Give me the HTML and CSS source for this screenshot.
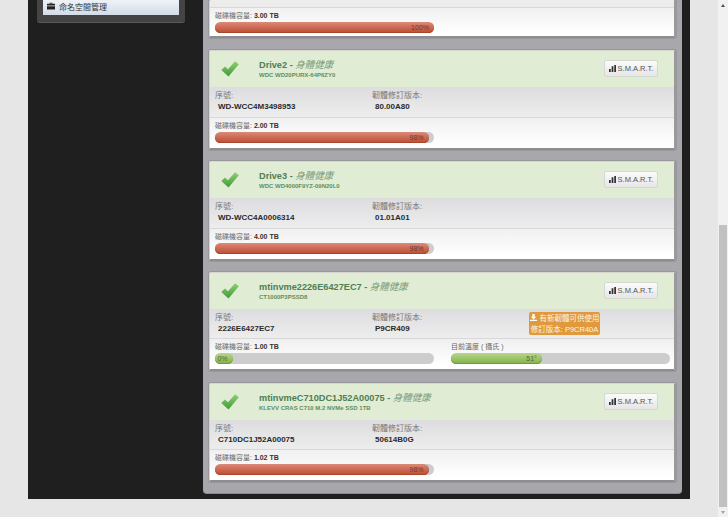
FILE: index.html
```html
<!DOCTYPE html>
<html lang="zh-Hant">
<head>
    <meta charset="UTF-8">
    <title>磁碟機</title>
    <link rel="stylesheet" href="styles.css">
</head>
<body>
    <svg class="defs" width="0" height="0">
        <defs>
            <linearGradient id="check-fill" x1="0" y1="0" x2="0" y2="1">
                <stop offset="0" stop-color="#8fd070"/>
                <stop offset="1" stop-color="#3f9a3c"/>
            </linearGradient>
            <symbol id="check" viewBox="0 0 18 16">
                <path d="M0.300 9 L4 5.400 L7 8.200 L14 0.300 L17.800 3.200 L7.500 15.600 Z" fill="url(#check-fill)"/>
            </symbol>
            <symbol id="bars" viewBox="0 0 8 8">
                <path d="M0 4.500h2V8H0zM3 1.500h2V8H3zM6 0h2v8H6z" fill="#333"/>
            </symbol>
        </defs>
    </svg>

    <div class="main">
        <!-- left menu -->
        <div class="sidebar">
            <div class="menu-panel">
                <div class="menu-item">
                    <svg class="menu-icon" viewBox="0 0 10 9"><path d="M3.4 1.6V.4h3.2v1.2H10V4H0V1.6zM4.2 1.6h1.6V1H4.2zM0 4.8h10V9H0z" fill="#222"/></svg>
                    命名空間管理
                </div>
            </div>
        </div>

        <div class="drive-panel">
            <!-- first card, scrolled off the top -->
            <div class="card card-cut">
                <div class="info-row info-row-cut"></div>
                <div class="meter-row">
                    <div class="meter">
                        <div class="meter-label">磁碟機容量: <b>3.00 TB</b></div>
                        <div class="track"><div class="fill red" style="width: 100%">100%</div></div>
                    </div>
                </div>
            </div>

            <div class="card">
                <div class="card-head">
                    <svg class="check"><use href="#check"/></svg>
                    <div class="head-text">
                        <div class="drive-name">Drive2 - <em>身體健康</em></div>
                        <div class="drive-model">WDC WD20PURX-64P6ZY0</div>
                    </div>
                    <button class="smart"><svg class="bars"><use href="#bars"/></svg>S.M.A.R.T.</button>
                </div>
                <div class="info-row">
                    <div class="info-col"><div class="info-label">序號:</div><div class="info-value">WD-WCC4M3498953</div></div>
                    <div class="info-col"><div class="info-label">韌體修訂版本:</div><div class="info-value">80.00A80</div></div>
                </div>
                <div class="meter-row">
                    <div class="meter">
                        <div class="meter-label">磁碟機容量: <b>2.00 TB</b></div>
                        <div class="track"><div class="fill red" style="width: 97.500%">98%</div></div>
                    </div>
                </div>
            </div>

            <div class="card">
                <div class="card-head">
                    <svg class="check"><use href="#check"/></svg>
                    <div class="head-text">
                        <div class="drive-name">Drive3 - <em>身體健康</em></div>
                        <div class="drive-model">WDC WD4000F9YZ-09N20L0</div>
                    </div>
                    <button class="smart"><svg class="bars"><use href="#bars"/></svg>S.M.A.R.T.</button>
                </div>
                <div class="info-row">
                    <div class="info-col"><div class="info-label">序號:</div><div class="info-value">WD-WCC4A0006314</div></div>
                    <div class="info-col"><div class="info-label">韌體修訂版本:</div><div class="info-value">01.01A01</div></div>
                </div>
                <div class="meter-row">
                    <div class="meter">
                        <div class="meter-label">磁碟機容量: <b>4.00 TB</b></div>
                        <div class="track"><div class="fill red" style="width: 97.500%">98%</div></div>
                    </div>
                </div>
            </div>

            <div class="card card-short">
                <div class="card-head">
                    <svg class="check"><use href="#check"/></svg>
                    <div class="head-text">
                        <div class="drive-name">mtinvme2226E6427EC7 - <em>身體健康</em></div>
                        <div class="drive-model">CT1000P3PSSD8</div>
                    </div>
                    <button class="smart"><svg class="bars"><use href="#bars"/></svg>S.M.A.R.T.</button>
                </div>
                <div class="info-row">
                    <div class="info-col"><div class="info-label">序號:</div><div class="info-value">2226E6427EC7</div></div>
                    <div class="info-col"><div class="info-label">韌體修訂版本:</div><div class="info-value">P9CR409</div></div>
                    <div class="update-badge">
                        <div><svg class="dl-icon" viewBox="0 0 9 9"><path d="M3 0h3v3.6h2L4.500 7 1 3.600h2zM0 7.500h9V9H0z" fill="#fff"/></svg>有新韌體可供使用</div>
                        <div>修訂版本: P9CR40A</div>
                    </div>
                </div>
                <div class="meter-row">
                    <div class="meter">
                        <div class="meter-label">磁碟機容量: <b>1.00 TB</b></div>
                        <div class="track"><div class="fill green" style="width: 8%">0%</div></div>
                    </div>
                    <div class="meter">
                        <div class="meter-label">目前溫度 ( 攝氏 )</div>
                        <div class="track"><div class="fill green" style="width: 41.500%">51°</div></div>
                    </div>
                </div>
            </div>

            <div class="card card-short">
                <div class="card-head">
                    <svg class="check"><use href="#check"/></svg>
                    <div class="head-text">
                        <div class="drive-name">mtinvmeC710DC1J52A00075 - <em>身體健康</em></div>
                        <div class="drive-model">KLEVV CRAS C710 M.2 NVMe SSD 1TB</div>
                    </div>
                    <button class="smart"><svg class="bars"><use href="#bars"/></svg>S.M.A.R.T.</button>
                </div>
                <div class="info-row">
                    <div class="info-col"><div class="info-label">序號:</div><div class="info-value">C710DC1J52A00075</div></div>
                    <div class="info-col"><div class="info-label">韌體修訂版本:</div><div class="info-value">50614B0G</div></div>
                </div>
                <div class="meter-row">
                    <div class="meter">
                        <div class="meter-label">磁碟機容量: <b>1.02 TB</b></div>
                        <div class="track"><div class="fill red" style="width: 97.500%">98%</div></div>
                    </div>
                </div>
            </div>
        </div>
    </div>

    <!-- browser scrollbar -->
    <div class="scrollbar">
        <div class="scroll-up"></div>
        <div class="scroll-space"></div>
        <div class="scroll-thumb"></div>
        <div class="scroll-down"></div>
    </div>
</body>
</html>
```

FILE: styles.css
```css
* {
    box-sizing: border-box;
}

body {
    margin: 0;
    height: 517px;
    overflow: hidden;
    display: flex;
    align-items: flex-start;
    background-color: #e6e6e6;
    font-family: "Liberation Sans", "Noto Sans CJK TC", sans-serif;
    color: #333;
}

.defs {
    position: absolute;
}

.main {
    width: 662px;
    height: 499px;
    margin-left: 28px;
    padding-left: 9px;
    display: flex;
    align-items: flex-start;
    background-color: #1f1f1f;
}

/* left menu */
.sidebar {
    width: 166px;
}

.menu-panel {
    width: 148px;
    padding: 0 6px 7px;
    background-color: #444;
    border-bottom: 1px solid #5a5a5a;
    border-radius: 0 0 3px 3px;
}

.menu-item {
    height: 15px;
    padding: 0 0 3px 4px;
    display: flex;
    align-items: center;
    gap: 4px;
    font-size: 8px;
    color: #333;
    background: linear-gradient(#eef2f7, #d3dce7);
}

.menu-icon {
    width: 8px;
    height: 8px;
}

/* drive cards */
.drive-panel {
    width: 479px;
    height: 494px;
    padding: 0 6px;
    background-color: #a7a7ac;
    border-radius: 0 0 4px 4px;
    border-bottom: 1px solid #8a8a8e;
}

.card {
    height: 100px;
    margin-bottom: 11px;
    padding-bottom: 3px;
    background-color: #fff;
    border: 1px solid #d6d6ce;
    border-bottom: 2px solid #8e8e8e;
    border-right: 2px solid #9a9a9a;
    border-radius: 2px;
    box-shadow: 0 0 0 1px #98989c;
    display: flex;
    flex-direction: column;
}

.card-short {
    height: 99px;
    margin-bottom: 12px;
}

.card-cut {
    height: 38px;
    margin-bottom: 12px;
    border-top: 0;
}

.card-head {
    height: 36px;
    flex: none;
    display: flex;
    padding: 0 16px 0 11px;
    background-color: #e0ecd4;
}

.check {
    width: 18px;
    height: 16px;
    margin-top: 10px;
}

.head-text {
    flex: 1;
    margin-left: 20px;
    padding-top: 8px;
}

.drive-name {
    font-size: 9.200px;
    font-weight: bold;
    line-height: 12px;
    color: #4f7f55;
}

.drive-name em {
    font-weight: normal;
    color: #7b9c7d;
    font-size: 9.500px;
}

.drive-model {
    font-size: 6px;
    font-weight: bold;
    line-height: 9px;
    color: #5f8f60;
}

.smart {
    width: 54px;
    height: 17px;
    margin-top: 9px;
    padding: 0;
    display: flex;
    align-items: center;
    justify-content: center;
    gap: 2px;
    font-family: inherit;
    font-size: 7.500px;
    color: #555;
    background: linear-gradient(#fbfbfb, #e6e6e6);
    border: 1px solid #d4d8d0;
    border-radius: 2px;
}

.bars {
    width: 7px;
    height: 7px;
}

.info-row {
    height: 31px;
    flex: none;
    display: flex;
    padding: 3px 4px 0 5px;
    position: relative;
    background: linear-gradient(#dddde0, #ededed);
    border-bottom: 1px solid #d8d8d8;
}

.card-short .info-row {
    height: 30px;
}

.info-row-cut {
    height: 8px;
    background: #ececec;
}

.info-col {
    width: 157px;
}

.info-label {
    font-size: 8px;
    line-height: 12px;
    color: #777;
}

.info-value {
    margin: -1px 0 0 3px;
    font-size: 8px;
    font-weight: bold;
    line-height: 12px;
    color: #2a2a2a;
}

.update-badge {
    position: absolute;
    left: 319px;
    top: 3px;
    width: 71px;
    height: 23px;
    padding-top: 1px;
    font-size: 7.500px;
    line-height: 11px;
    text-align: center;
    color: #fff3e0;
    background-color: #e09a3c;
    border-radius: 2px;
}

.dl-icon {
    width: 7px;
    height: 7px;
    margin-right: 3px;
}

.meter-row {
    flex: 1;
    display: flex;
    gap: 17px;
    padding: 2px 4px 0 5px;
    background: linear-gradient(#f0f0f0, #fff);
}

.meter {
    width: 219px;
}

.meter-label {
    font-size: 7px;
    line-height: 11px;
    color: #666;
}

.meter-label b {
    color: #333;
}

.track {
    height: 11px;
    margin-top: 1px;
    background-color: #cdcdcd;
    border-radius: 6px;
}

.fill {
    height: 11px;
    padding-right: 5px;
    font-size: 7px;
    line-height: 11px;
    text-align: right;
    color: #6b3b30;
    border-radius: 6px;
}

.fill.red {
    background: linear-gradient(#dc8a78, #cb6a55 50%, #bd4d30);
    box-shadow: inset 0 -1px 0 #a8452c;
}

.fill.green {
    color: #4d6b33;
    background: linear-gradient(#b8d68c, #9cc468 50%, #84b04c);
    box-shadow: inset 0 -1px 0 #6e9a3c;
}

/* browser scrollbar */
.scrollbar {
    width: 10px;
    height: 517px;
    margin-left: auto;
    padding-right: 1px;
    display: flex;
    flex-direction: column;
    align-items: flex-end;
    background-color: #f1f1f1;
}

.scroll-up,
.scroll-down {
    width: 8px;
    height: 10px;
    display: flex;
    align-items: center;
    justify-content: center;
}

.scroll-up::before,
.scroll-down::before {
    content: "";
    border-left: 2px solid transparent;
    border-right: 2px solid transparent;
}

.scroll-up::before {
    border-bottom: 3px solid #505050;
}

.scroll-down::before {
    border-top: 3px solid #a3a3a3;
}

.scroll-space {
    height: 215px;
}

.scroll-thumb {
    width: 8px;
    flex: 1;
    background-color: #c1c1c1;
}
```
